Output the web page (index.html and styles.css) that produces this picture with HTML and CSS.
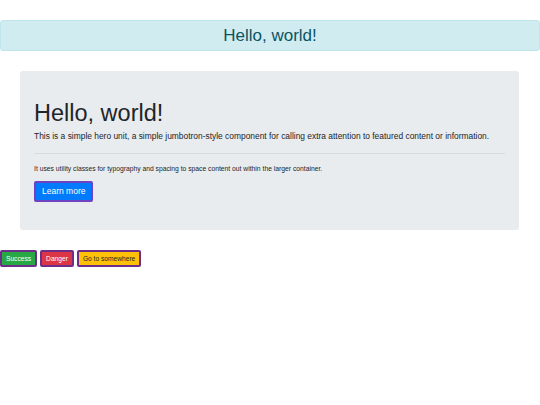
FILE: index.html
```html
<!DOCTYPE html>
<html lang="en">
<head>
    <meta charset="UTF-8">
    <meta name="viewport" content="width=device-width, initial-scale=1.0">
    <title>Hello, world!</title>
    <link rel="stylesheet" href="styles.css">
</head>
<body>
    <div class="alert">Hello, world!</div>

    <div class="jumbotron">
        <h1 class="display">Hello, world!</h1>
        <p class="lead">This is a simple hero unit, a simple jumbotron-style component for calling extra attention to featured content or information.</p>
        <hr>
        <p class="note">It uses utility classes for typography and spacing to space content out within the larger container.</p>
        <a class="btn btn-primary btn-lg" href="#">Learn more</a>
    </div>

    <div class="actions">
        <button class="btn btn-success">Success</button>
        <button class="btn btn-danger">Danger</button>
        <button class="btn btn-warning">Go to somewhere</button>
    </div>
</body>
</html>
```

FILE: styles.css
```css
body {
    margin: 0;
    font-family: "Liberation Sans", Arial, sans-serif;
    color: #212529;
    background: #fff;
}
.alert {
    margin-top: 20px;
    padding: 5px 0;
    height: 19px;
    line-height: 19px;
    text-align: center;
    font-size: 17px;
    color: #0c5460;
    background: #d1ecf1;
    border: 1px solid #bee5eb;
    border-radius: 3px;
}
.jumbotron {
    margin: 20px 21px 20px 20px;
    padding: 28px 14px 28px 14px;
    background: #e9ecef;
    border-radius: 3px;
}
.display {
    margin: 0 0 3px;
    font-size: 23.5px;
    font-weight: 300;
    line-height: 1.2;
}
.lead {
    margin: 0;
    font-size: 8.42px;
    line-height: 1.5;
}
hr {
    margin: 10px 0;
    border: 0;
    border-top: 1px solid #d7dade;
}
.note {
    margin: 0 0 6px;
    font-size: 6.75px;
    line-height: 1.5;
}
.btn {
    display: inline-block;
    font-family: inherit;
    text-decoration: none;
    border: 2px solid #6f2d8a;
    border-radius: 2px;
    cursor: pointer;
}
.btn-lg {
    padding: 3px 6px;
    font-size: 8.5px;
    line-height: 11px;
}
.btn-primary {
    color: #fff;
    background: #007bff;
    border-color: #6f42c1;
}
.actions {
    font-size: 0;
}
.actions .btn {
    margin-right: 3px;
    padding: 2px 4px;
    font-size: 6.65px;
    line-height: 9px;
}
.btn-success {
    color: #fff;
    background: #28a745;
}
.btn-danger {
    color: #fff;
    background: #dc3545;
}
.btn-warning {
    color: #212529;
    background: #ffc107;
}
```
